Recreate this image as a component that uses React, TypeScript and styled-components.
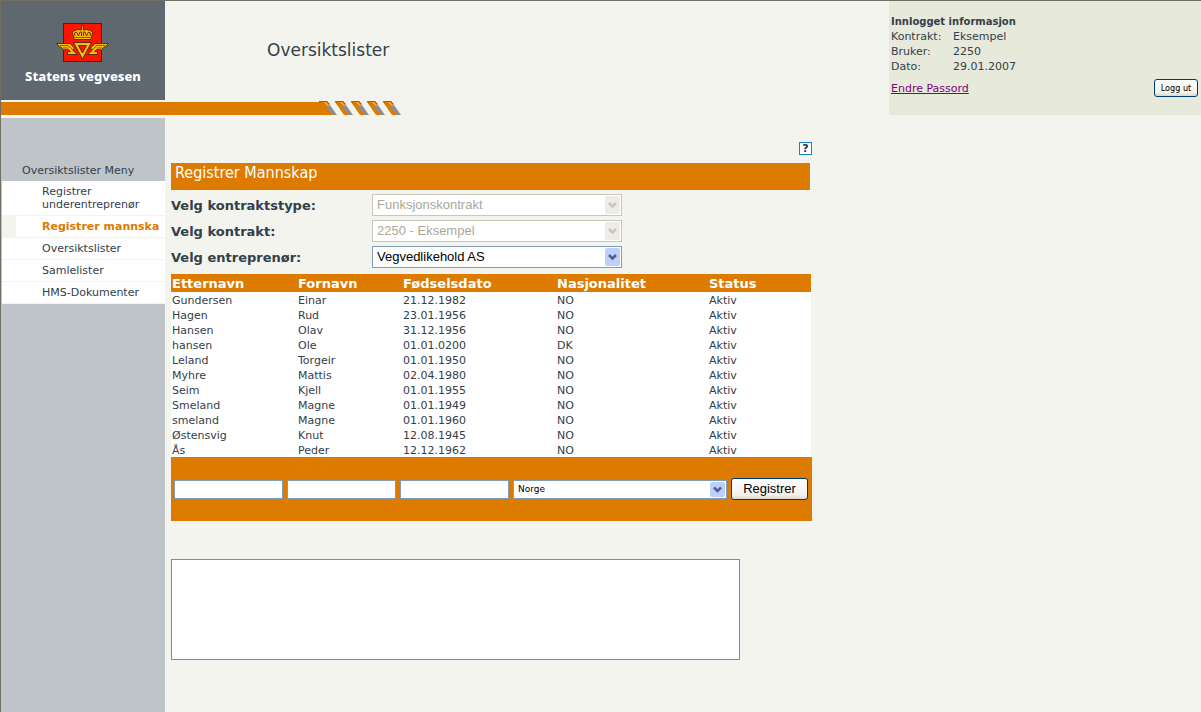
import React from "react";
import styled, { createGlobalStyle } from "styled-components";

const ORANGE = "#dd7a00";
const INK = "#334049";
const PAPER = "#f3f4ee";
const VERDANA = `Verdana, "DejaVu Sans", sans-serif`;
const ARIAL = `Arial, "Liberation Sans", sans-serif`;
const TAHOMA = `Tahoma, "DejaVu Sans Condensed", sans-serif`;

const GlobalStyle = createGlobalStyle`
  *, *::before, *::after { box-sizing: border-box; }
  body { margin: 0; background: ${PAPER}; color: ${INK}; font: 11px/15px ${VERDANA}; }
`;

const Page = styled.div`
  display: flex;
  flex-direction: column;
  min-height: 100vh;
  border-top: 1px solid #716f64;
  border-left: 1px solid #716f64;
`;

const Header = styled.header`
  display: flex;
  align-items: stretch;
  height: 117px;
`;

const Brand = styled.div`
  flex: 1;
  display: flex;
  flex-direction: column;
`;

const BrandRow = styled.div`
  display: flex;
  height: 99px;
`;

const LogoPanel = styled.div`
  width: 164px;
  background: #60686f;
  display: flex;
  flex-direction: column;
  align-items: center;
  padding-top: 21px;
`;

const LogoText = styled.span`
  font: bold 13px/18px "Noto Sans", sans-serif;
  font-weight: 800;
  color: #fff;
  margin-top: 4px;
`;

const AppTitle = styled.h1`
  margin: 0;
  padding: 38px 0 0 102px;
  font: 17px/22px ${VERDANA};
`;

const Stripe = styled.svg`
  display: block;
  margin-top: 1px;
`;

const LoginPanel = styled.section`
  display: flex;
  justify-content: space-between;
  align-items: flex-end;
  width: 26%;
  min-width: 260px;
  height: 114px;
  padding: 13px 3px 18px 2px;
  background: #e7e9db;
`;

const LoginFacts = styled.div`
  align-self: flex-start;
`;

const LoginTitle = styled.h2`
  margin: 0;
  font: bold 10px/15px ${VERDANA};
`;

const FactList = styled.dl`
  display: grid;
  grid-template-columns: 62px auto;
  margin: 0 0 7px;
`;

const Fact = styled.dd`
  margin: 0;
`;

const PasswordLink = styled.a`
  color: #800080;
`;

const XpButton = styled.button<{ $small?: boolean }>`
  height: ${(p) => (p.$small ? 18 : 22)}px;
  width: ${(p) => (p.$small ? 44 : 77)}px;
  padding: 0;
  border: 1px solid #003c74;
  border-radius: 3px;
  background: linear-gradient(#fff, #f2f1ec 80%, #dcd8cd);
  color: #000;
  font: ${(p) => (p.$small ? `9px/14px ${TAHOMA}` : `13px/18px ${ARIAL}`)};
`;

const Body = styled.div`
  flex: 1;
  display: flex;
`;

const Sidebar = styled.nav`
  flex: none;
  width: 164px;
  background: #bfc4c8;
  padding-top: 45px;
`;

const MenuTitle = styled.h2`
  margin: 0;
  padding: 0 0 3px 21px;
  font: 11px/15px ${VERDANA};
`;

const Menu = styled.ul`
  list-style: none;
  margin: 0 0 0 1px;
  padding: 0;
`;

const MenuItem = styled.li<{ $active?: boolean }>`
  border-left: ${(p) => (p.$active ? `14px solid ${PAPER}` : "0")};
  border-bottom: 1px solid ${PAPER};
  background: #fff;
  padding: 4px 0 4px ${(p) => (p.$active ? 26 : 40)}px;
  line-height: 13px;
  white-space: ${(p) => (p.$active ? "nowrap" : "normal")};
`;

const MenuLink = styled.a<{ $active?: boolean }>`
  color: ${(p) => (p.$active ? ORANGE : INK)};
  font-weight: ${(p) => (p.$active ? "bold" : "normal")};
  text-decoration: none;
`;

const Main = styled.main`
  flex: 1;
  max-width: 647px;
  padding: 24px 0 52px 6px;
`;

const HelpRow = styled.div`
  display: flex;
  justify-content: flex-end;
  margin-bottom: 8px;
`;

const HelpButton = styled.button`
  width: 13px;
  height: 13px;
  padding: 0;
  border: 1px solid #1a85c0;
  background: #fff;
  color: #1c3550;
  font: bold 11px/11px ${VERDANA};
`;

const SectionTitle = styled.h2`
  margin: 0 2px 2px 0;
  height: 27px;
  padding: 0 4px;
  background: ${ORANGE};
  color: #fff;
  font: 16px/20px ${TAHOMA};
`;

const FieldRow = styled.div`
  display: flex;
  align-items: center;
  height: 26px;
`;

const FieldLabel = styled.label`
  width: 201px;
  padding-top: 2px;
  font: bold 13px/18px ${VERDANA};
`;

const SelectFrame = styled.span<{ $small?: boolean }>`
  position: relative;
  flex: none;
  display: block;
  width: ${(p) => (p.$small ? 214 : 250)}px;
  height: ${(p) => (p.$small ? 19 : 22)}px;
`;

const Select = styled.select<{ $small?: boolean }>`
  appearance: none;
  width: 100%;
  height: 100%;
  padding: 0 20px 0 4px;
  border: 1px solid #7f9db9;
  border-radius: 0;
  background: #fff;
  color: #000;
  font: ${(p) => (p.$small ? `9px/15px ${VERDANA}` : `13px/18px ${ARIAL}`)};
  &:disabled {
    border-color: #c9c7ba;
    color: #aca899;
    opacity: 1;
  }
`;

const SelectArrow = styled.svg`
  position: absolute;
  top: 2px;
  right: 2px;
  width: 15px;
  height: calc(100% - 4px);
  border-radius: 2px;
  pointer-events: none;
`;

const Crew = styled.table`
  width: 640px;
  max-width: 100%;
  margin-top: 4px;
  table-layout: fixed;
  border-collapse: collapse;
  background: #fff;
`;

const CrewCol = styled.col<{ $w?: number }>`
  width: ${(p) => (p.$w ? `${p.$w}px` : "auto")};
`;

const HeadCell = styled.th`
  padding: 2px 1px 0;
  background: ${ORANGE};
  color: #fff;
  text-align: left;
  font: bold 13px/16px ${VERDANA};
`;

const Cell = styled.td`
  padding: 2px 1px 0;
  line-height: 13px;
`;

const EntryForm = styled.form`
  display: flex;
  align-items: center;
  gap: 4px;
  height: 64px;
  padding: 0 4px 0 3px;
  background: ${ORANGE};
`;

const EntryInput = styled.input`
  flex: 1;
  min-width: 0;
  height: 19px;
  border: 1px solid #7f9db9;
  padding: 1px 3px;
  font: 11px/15px ${VERDANA};
`;

const Messages = styled.textarea`
  display: block;
  width: 569px;
  max-width: 100%;
  height: 101px;
  margin-top: 38px;
  border: 1px solid ${ORANGE};
  background: #fff;
  resize: none;
`;

const people = [
  ["Gundersen", "Einar", "21.12.1982", "NO"],
  ["Hagen", "Rud", "23.01.1956", "NO"],
  ["Hansen", "Olav", "31.12.1956", "NO"],
  ["hansen", "Ole", "01.01.0200", "DK"],
  ["Leland", "Torgeir", "01.01.1950", "NO"],
  ["Myhre", "Mattis", "02.04.1980", "NO"],
  ["Seim", "Kjell", "01.01.1955", "NO"],
  ["Smeland", "Magne", "01.01.1949", "NO"],
  ["smeland", "Magne", "01.01.1960", "NO"],
  ["Østensvig", "Knut", "12.08.1945", "NO"],
  ["Ås", "Peder", "12.12.1962", "NO"],
];

const columns = ["Etternavn", "Fornavn", "Fødselsdato", "Nasjonalitet", "Status"];

function Emblem() {
  return (
    <svg width="54" height="41" viewBox="0 0 54 41" aria-hidden="true">
      <rect x="7.5" y="1.5" width="38" height="38" fill="#fb1500" stroke="#3a2320" />
      <g fill="#f7bd0c" stroke="#4a2a10" strokeWidth="0.9" strokeLinejoin="round">
        <path d="M0.500 21.500H14L18.500 26L16.500 28L21.500 32.500H11.500V29.500H14.500L12.500 27.500L7 28L5.500 25.500L3.500 24.500Z" />
        <path d="M52.500 21.500H39L34.500 26L36.500 28L31.500 32.500H41.500V29.500H38.500L40.500 27.500L46 28L47.500 25.500L49.500 24.500Z" />
        <path fillRule="evenodd" d="M17.500 20.500H35.500L26.500 37ZM22.500 23.500L26.500 31L30.500 23.500Z" />
        <path d="M18 17.500L16.500 10.500L18.500 8.500L22 7.500L25.500 8V3.500H27.500V8L31 7.500L34.500 8.500L36.500 10.500L35 17.500Z" />
      </g>
      <g fill="none" stroke="#8b1c08" strokeWidth="1">
        <path d="M19 14L18.500 11L20.500 10L22.500 14L24 10H25.500V14M34 14L34.500 11L32.500 10L30.500 14L29 10H27.500V14" />
        <path d="M18 15.500H35" strokeWidth="0.700" />
        <path d="M4 23.500H12L16 27M7 26H12M49 23.500H41L37 27M46 26H41" strokeWidth="0.700" />
      </g>
    </svg>
  );
}

function HazardStripe() {
  return (
    <Stripe width="400" height="15" viewBox="0 0 400 15" aria-hidden="true">
      <rect y="1" width="326" height="13" fill={ORANGE} />
      {[318, 334, 350, 366, 382].map((x, i) => (
        <g key={x}>
          <path d={i ? `M${x} 1H${x + 8}L${x + 16} 14H${x + 9}Z` : `M${x} 1H${x + 8}L${x + 16} 14H${x}Z`} fill={ORANGE} />
          <path d={`M${x + 8} 4H${x + 11}L${x + 18} 14H${x + 14}L${x + 7} 6Z`} fill="#899094" />
          <path d={`M${x + 5} 1H${x + 8}L${x + 11} 4L${x + 9} 5Z`} fill="#f4c808" />
          <path d={`M${x} 0H${x + 8}L${x + 11} 3L${x + 10} 4L${x + 7} 1H${x}Z`} fill="#e03a22" />
        </g>
      ))}
    </Stripe>
  );
}

interface DropdownProps {
  id: string;
  value: string;
  disabled?: boolean;
  small?: boolean;
  label?: string;
}

function Dropdown({ id, value, disabled, small, label }: DropdownProps) {
  return (
    <SelectFrame $small={small}>
      <Select id={id} name={id} disabled={disabled} $small={small} aria-label={label}>
        <option>{value}</option>
      </Select>
      <SelectArrow viewBox="0 0 15 18" preserveAspectRatio="xMidYMid slice" aria-hidden="true">
        <rect width="15" height="18" fill={disabled ? "#ecebe4" : "#bdd0fb"} />
        <path d="M4 7L7.500 10.500L11 7" fill="none" stroke={disabled ? "#c9c7ba" : "#4d6185"} strokeWidth="2.500" />
      </SelectArrow>
    </SelectFrame>
  );
}

const fields = [
  { id: "kontraktstype", label: "Velg kontraktstype:", value: "Funksjonskontrakt", disabled: true },
  { id: "kontrakt", label: "Velg kontrakt:", value: "2250 - Eksempel", disabled: true },
  { id: "entreprenor", label: "Velg entreprenør:", value: "Vegvedlikehold AS", disabled: false },
];

const menu = ["Registrer underentreprenør", "Registrer mannska", "Oversiktslister", "Samlelister", "HMS-Dokumenter"];

export default function App() {
  return (
    <Page>
      <GlobalStyle />
      <Header>
        <Brand>
          <BrandRow>
            <LogoPanel>
              <Emblem />
              <LogoText>Statens vegvesen</LogoText>
            </LogoPanel>
            <AppTitle>Oversiktslister</AppTitle>
          </BrandRow>
          <HazardStripe />
        </Brand>
        <LoginPanel>
          <LoginFacts>
            <LoginTitle>Innlogget informasjon</LoginTitle>
            <FactList>
              <dt>Kontrakt:</dt>
              <Fact>Eksempel</Fact>
              <dt>Bruker:</dt>
              <Fact>2250</Fact>
              <dt>Dato:</dt>
              <Fact>29.01.2007</Fact>
            </FactList>
            <PasswordLink href="#passord">Endre Passord</PasswordLink>
          </LoginFacts>
          <XpButton type="button" $small>Logg ut</XpButton>
        </LoginPanel>
      </Header>
      <Body>
        <Sidebar>
          <MenuTitle>Oversiktslister Meny</MenuTitle>
          <Menu>
            {menu.map((item, i) => (
              <MenuItem key={item} $active={i === 1}>
                <MenuLink href="#meny" $active={i === 1}>{item}</MenuLink>
              </MenuItem>
            ))}
          </Menu>
        </Sidebar>
        <Main>
          <HelpRow>
            <HelpButton type="button">?</HelpButton>
          </HelpRow>
          <SectionTitle>Registrer Mannskap</SectionTitle>
          {fields.map((f) => (
            <FieldRow key={f.id}>
              <FieldLabel htmlFor={f.id}>{f.label}</FieldLabel>
              <Dropdown id={f.id} value={f.value} disabled={f.disabled} />
            </FieldRow>
          ))}
          <Crew>
            <colgroup>
              <CrewCol $w={126} />
              <CrewCol $w={105} />
              <CrewCol $w={154} />
              <CrewCol $w={152} />
              <CrewCol />
            </colgroup>
            <thead>
              <tr>{columns.map((c) => <HeadCell key={c} scope="col">{c}</HeadCell>)}</tr>
            </thead>
            <tbody>
              {people.map((person) => (
                <tr key={person[0]}>
                  {person.map((value, i) => <Cell key={i}>{value}</Cell>)}
                  <Cell>Aktiv</Cell>
                </tr>
              ))}
            </tbody>
          </Crew>
          <EntryForm>
            <EntryInput aria-label="Etternavn" />
            <EntryInput aria-label="Fornavn" />
            <EntryInput aria-label="Fødselsdato" />
            <Dropdown id="land" value="Norge" small label="Nasjonalitet" />
            <XpButton type="button">Registrer</XpButton>
          </EntryForm>
          <Messages aria-label="Meldinger" readOnly />
        </Main>
      </Body>
    </Page>
  );
}
